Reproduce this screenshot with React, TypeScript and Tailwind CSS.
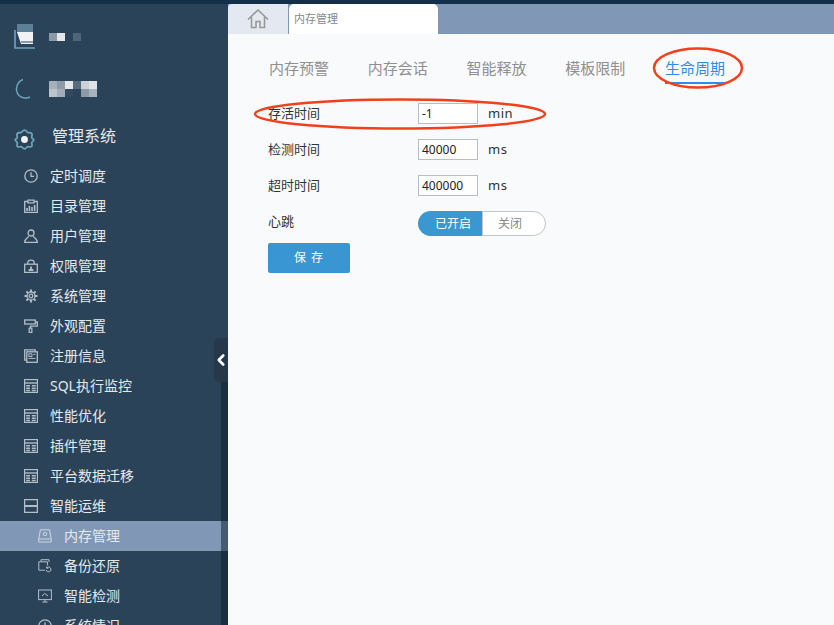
import { ChevronLeft } from "lucide-react";
import type { ReactNode } from "react";

const stroke = { fill: "none", stroke: "currentColor", strokeWidth: 1.3 };

function Ico({ children, className = "" }: { children: ReactNode; className?: string }) {
  return (
    <svg viewBox="0 0 14 14" className={`size-[14px] shrink-0 ${className}`} {...stroke}>
      {children}
    </svg>
  );
}

const ClockIco = () => (
  <Ico>
    <circle cx="7" cy="7" r="6.2" />
    <path d="M7 3.2V7.4H10" />
  </Ico>
);
const ClipIco = () => (
  <Ico>
    <path d="M4 2.5H.7V13.4H13.3V2.5H10" />
    <path d="M4 3.8V1.2H10V3.8Z" />
    <path d="M3 12V9M5.4 12V7M8 12V8M10.6 12V6" strokeWidth="1.6" />
  </Ico>
);
const UserIco = () => (
  <Ico>
    <circle cx="7" cy="4" r="3" />
    <path d="M4.8 7.2C4 9 .9 9.5.7 13.3H13.3C13.1 9.5 10 9 9.2 7.2" />
  </Ico>
);
const LockIco = () => (
  <Ico>
    <rect x=".7" y="5.2" width="12.6" height="8.2" />
    <path d="M3.8 5V3.6C3.8 .2 10.2 .2 10.2 3.6V5" />
    <path d="M7 7.5V10M4.6 11H9.4" strokeWidth="1.8" />
  </Ico>
);
const GearIco = () => (
  <Ico>
    <circle cx="7" cy="7" r="1.8" />
    <circle cx="7" cy="7" r="4" />
    <path
      d="M7 .5V3M7 11V13.5M.5 7H3M11 7H13.5M2.4 2.4L4.2 4.2M9.8 9.8L11.6 11.6M11.6 2.4L9.8 4.2M4.2 9.8L2.4 11.6"
      strokeWidth="1.9"
    />
  </Ico>
);
const RollerIco = () => (
  <Ico>
    <rect x=".7" y="1" width="10.6" height="4" />
    <path d="M11.3 3H13.3V7.2H6.5V9.2" />
    <rect x="5.2" y="9.2" width="2.6" height="4.4" />
  </Ico>
);
const NewsIco = () => (
  <Ico>
    <path d="M2.8 11.2H.7V.8H11.2V2.8" />
    <rect x="2.8" y="2.8" width="10.5" height="10.5" />
    <path d="M4.8 4.8H8V7.5H4.8Z" strokeWidth="1" />
    <path d="M4.6 9.4H11.4M9.4 5.4H11.4" strokeWidth="1" />
  </Ico>
);
const TableIco = () => (
  <svg viewBox="0 0 14 14" className="size-[14px] shrink-0" fill="none" stroke="currentColor">
    <rect x=".6" y=".6" width="12.8" height="12.8" strokeWidth="1.2" />
    <path d="M1 4H13" strokeWidth="1.4" />
    <path d="M2.2 6.8H6M7.8 6.8H11.8M2.2 9.2H6M7.8 9.2H11.8M2.2 11.4H6M7.8 11.4H11.8" strokeWidth="1.5" />
  </svg>
);
const MinusBoxIco = () => (
  <Ico>
    <rect x=".6" y=".6" width="12.8" height="12.8" />
    <path d="M1 7H13" strokeWidth="2" />
  </Ico>
);
const DiskIco = () => (
  <Ico>
    <path d="M2.4 .8H11.6L13.2 9.8V13H.8V9.8Z" strokeWidth="1" />
    <path d="M1 10H13" strokeWidth="1" />
    <circle cx="7" cy="5" r="1.7" strokeWidth="1" />
  </Ico>
);
const CopyIco = () => (
  <Ico>
    <path d="M3 2.6V.7H11V3" strokeWidth="1" />
    <path d="M7 11.2H.8V2.8H9.4V6.5" strokeWidth="1" />
    <path d="M9 8.6A2.4 2.4 0 1 1 8.2 11M8.6 7.6V9.2H10.2" strokeWidth="1" />
  </Ico>
);
const ScreenIco = () => (
  <Ico>
    <rect x=".6" y="1" width="12.8" height="9.6" strokeWidth="1" />
    <path d="M4 7L6.6 4.4L10 7M4.4 13H9.6M7 10.6V13" strokeWidth="1" />
  </Ico>
);

const topMenu = [
  { label: "定时调度", icon: <ClockIco /> },
  { label: "目录管理", icon: <ClipIco /> },
  { label: "用户管理", icon: <UserIco /> },
  { label: "权限管理", icon: <LockIco /> },
  { label: "系统管理", icon: <GearIco /> },
  { label: "外观配置", icon: <RollerIco /> },
  { label: "注册信息", icon: <NewsIco /> },
  { label: "SQL执行监控", icon: <TableIco /> },
  { label: "性能优化", icon: <TableIco /> },
  { label: "插件管理", icon: <TableIco /> },
  { label: "平台数据迁移", icon: <TableIco /> },
  { label: "智能运维", icon: <MinusBoxIco /> },
];

const subMenu = [
  { label: "内存管理", icon: <DiskIco />, active: true },
  { label: "备份还原", icon: <CopyIco /> },
  { label: "智能检测", icon: <ScreenIco /> },
  { label: "系统情况", icon: <ClockIco /> },
];

const subTabs = ["内存预警", "内存会话", "智能释放", "模板限制", "生命周期"];

const fields = [
  { label: "存活时间", value: "-1", unit: "min" },
  { label: "检测时间", value: "40000", unit: "ms" },
  { label: "超时时间", value: "400000", unit: "ms" },
];

// mosaic blocks that hide the product name in the picture
const blocksA = ["bg-[#8a99a8]", "bg-[#e4e7ea]", "bg-transparent", "bg-[#4f6578]"];
const blocksB = [
  "bg-[#a5b0ba]", "bg-[#8d9ba8]", "bg-[#e4e7ea]", "bg-[#576c7e]", "bg-[#ccd2d8]", "bg-[#dfe2e6]",
  "bg-[#bcc4cb]", "bg-[#a2adb7]", "bg-[#33495f]", "bg-[#2a4359]", "bg-[#8d9ba8]", "bg-[#a9b3bd]",
];

function Sidebar() {
  return (
    <aside className="relative h-full w-[228px] shrink-0 overflow-hidden bg-[#2a4359] text-[#e6e9ec]">
      <div className="flex h-[50px] items-center pt-[16px] pl-[14px]">
        <svg viewBox="0 0 22 26" className="h-[26px] w-[22px] shrink-0">
          <rect x="3" y="0" width="16" height="8" fill="#5c8097" />
          <path d="M3 8H19V20H7Z" fill="#f0f2f3" />
          <path d="M1 6V24H21" fill="none" stroke="#6fa5bb" strokeWidth="1.6" />
          <path d="M7 18H19" stroke="#2a4359" strokeWidth="1" />
        </svg>
        <div className="ml-[13px] flex">
          {blocksA.map((c, i) => (
            <div key={i} className={`size-[8px] ${c}`} />
          ))}
        </div>
      </div>
      <div className="mt-[23px] flex h-[24px] items-center pl-[14px]">
        <svg viewBox="0 0 20 22" className="h-[22px] w-[20px] shrink-0" fill="none" stroke="#6fa5bb" strokeWidth="1.4">
          <path d="M9 1.5C3 4 0 12 5 17.5C8 20.5 13 20.5 16 19" />
        </svg>
        <div className="ml-[15px] grid grid-cols-6">
          {blocksB.map((c, i) => (
            <div key={i} className={`size-[8px] ${c}`} />
          ))}
        </div>
      </div>
      <div className="mt-[24px] flex h-[28px] items-center pl-[14px]">
        <svg viewBox="0 0 22 22" className="size-[21px] shrink-0" fill="none" stroke="#6fa5bb" strokeWidth="1.8">
          <circle cx="11" cy="11" r="3.6" fill="#f0f2f3" stroke="none" />
          <path d="M11 1.2C12.8 1.2 13.4 3 14.4 3.6C15.6 4.2 17.4 3.4 18.6 4.8C19.6 6.2 18.4 7.6 18.6 9C18.8 10 20.8 10.6 20.8 11C20.8 12.6 19 13.2 18.6 14.4C18.2 15.6 19.6 17 18.6 18.2C17.2 19.6 15.6 18.2 14.4 18.4C13.2 18.8 12.8 20.8 11 20.8C9.2 20.8 8.8 18.8 7.6 18.4C6.4 18.2 4.8 19.6 3.4 18.2C2.4 17 3.8 15.6 3.4 14.4C3 13.2 1.2 12.6 1.2 11C1.2 10.6 3.2 10 3.4 9C3.6 7.6 2.4 6.2 3.4 4.8C4.6 3.4 6.4 4.2 7.6 3.6C8.6 3 9.2 1.2 11 1.2Z" />
        </svg>
        <span className="mb-[6px] ml-[17px] text-[16px]">管理系统</span>
      </div>
      <nav className="mt-[8px]">
        {topMenu.map((m) => (
          <div key={m.label} className="flex h-[30px] items-center pl-[24px] text-[14px]">
            <span className="flex text-[#b4bec7]">{m.icon}</span>
            <span className="mb-[2px] ml-[12px]">{m.label}</span>
          </div>
        ))}
        {subMenu.map((m) => (
          <div
            key={m.label}
            className={`flex h-[30px] items-center pl-[38px] text-[14px] ${m.active ? "bg-[#8098b6]" : ""}`}
          >
            <span className={`flex ${m.active ? "text-[#ccd6e2]" : "text-[#b4bec7]"}`}>{m.icon}</span>
            <span className="mb-[2px] ml-[12px]">{m.label}</span>
          </div>
        ))}
      </nav>
      <div className="absolute top-[364px] right-0 bottom-0 w-[7px] bg-[#0d1c2a]/50" />
      <div className="absolute top-[334px] right-0 flex h-[44px] w-[14px] items-center justify-center rounded-l-[5px] bg-[#26384a]">
        <ChevronLeft className="size-[18px] shrink-0 text-white" strokeWidth={3.5} />
      </div>
    </aside>
  );
}

function TabBar() {
  return (
    <div className="flex h-[30px] bg-[#8098b6]">
      <div className="flex w-[60px] items-center justify-center rounded-tl-[4px] bg-[#e4e8f0]">
        <svg viewBox="0 0 22 20" className="h-[20px] w-[22px] text-[#999999]" fill="none" stroke="currentColor" strokeWidth="1.6">
          <path d="M1 10.5L11 1L21 10.5M4.5 8V18.5H9V12.5H13V18.5H17.5V8" />
        </svg>
      </div>
      <div className="ml-[1px] flex w-[149px] items-center rounded-t-[5px] bg-white pl-[5px] text-[11px] text-[#888888]">
        内存管理
      </div>
    </div>
  );
}

function Content() {
  return (
    <div className="flex-1 bg-[#f9fafc] pl-[40px]">
      <div className="flex gap-[38.75px] pt-[23px] pl-[1px]">
        {subTabs.map((t, i) => (
          <div
            key={t}
            className={`h-[27px] text-[15px] leading-[22px] ${
              i === 4 ? "ml-[1px] border-b-2 border-[#2d8cf0] text-[#2d8cf0]" : "text-[#8f8f8f]"
            }`}
          >
            {t}
          </div>
        ))}
      </div>
      <div className="mt-[19px] flex flex-col gap-[15px]">
        {fields.map((f) => (
          <div key={f.label} className="flex h-[21px] items-center text-[13px] text-[#333333]">
            <span className="w-[150px]">{f.label}</span>
            <div className="flex h-[21px] w-[60px] items-center border border-[#b8bccc] bg-white pl-[3px] text-[12px] text-[#222222]">
              {f.value}
            </div>
            <span className="ml-[10px] tracking-[0.5px]">{f.unit}</span>
          </div>
        ))}
      </div>
      <div className="mt-[15px] flex h-[25px] items-center text-[13px] text-[#333333]">
        <span className="mb-[3px] w-[150px]">心跳</span>
        <div className="flex h-[25px] w-[128px] text-[12px]">
          <div className="flex w-[64px] items-center justify-center rounded-l-full bg-[#3b97d0] pl-[6px] text-white">
            已开启
          </div>
          <div className="flex flex-1 items-center justify-center rounded-r-full border border-[#c0c4cc] bg-white pr-[8px] text-[#888888]">
            关闭
          </div>
        </div>
      </div>
      <button className="mt-[7px] flex h-[30px] w-[82px] items-center justify-center rounded-[2px] bg-[#3a96d2] text-[12px] tracking-[1px] text-white">
        保 存
      </button>
    </div>
  );
}

export default function App() {
  return (
    <div
      className="relative h-[625px] w-[834px] overflow-hidden bg-[#132f4a]"
      style={{ fontFamily: '"Noto Sans", "Noto Sans CJK SC", sans-serif' }}
    >
      <div className="flex h-[4px]" />
      <div className="flex h-[621px]">
        <Sidebar />
        <main className="flex min-w-0 flex-1 flex-col">
          <TabBar />
          <Content />
        </main>
      </div>
      {/* red hand-drawn circles on top of the screenshot */}
      <svg className="pointer-events-none absolute inset-0" width="834" height="625" fill="none" stroke="#f0401c" strokeWidth="2.5">
        <ellipse cx="698" cy="68" rx="44" ry="19.5" />
        <ellipse cx="400" cy="114" rx="145" ry="14.5" />
      </svg>
    </div>
  );
}
